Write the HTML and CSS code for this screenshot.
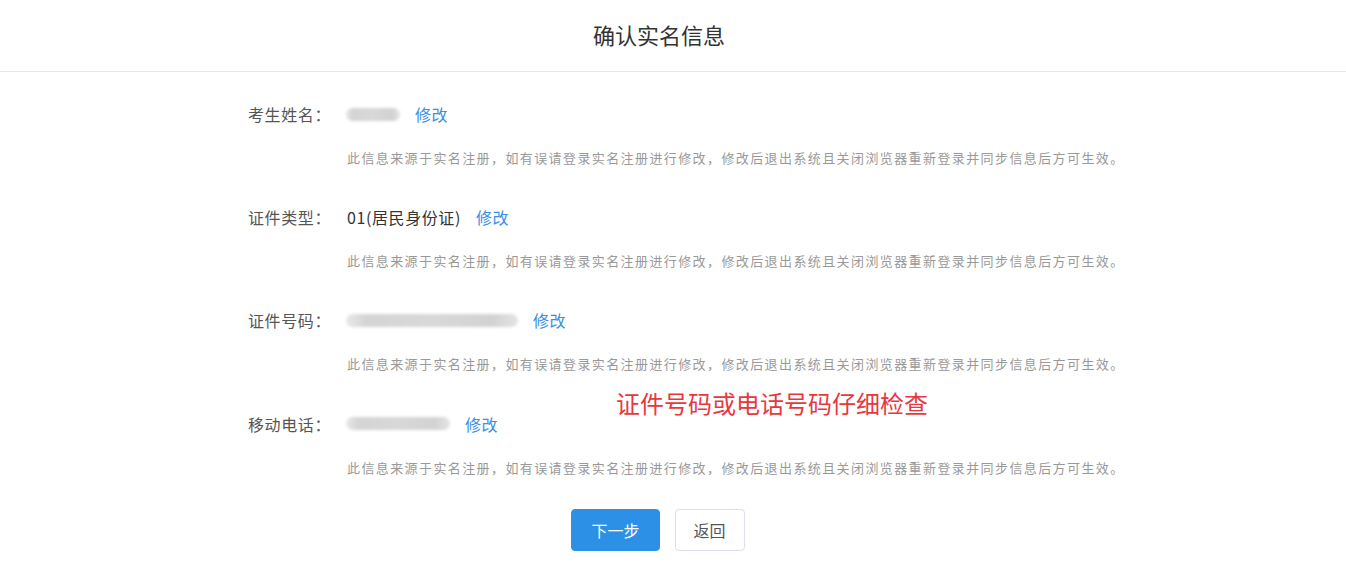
FILE: index.html
```html
<!DOCTYPE html>
<html>
  <head>
    <meta charset="utf-8">
    <title>确认实名信息</title>
    <link rel="stylesheet" href="styles.css">
  </head>
  <body>
    <div class="header">确认实名信息</div>
    <div class="form">
      <div class="row">
        <div class="line">
          <span class="label">考生姓名：</span>
          <span class="blur" style="width: 54px;"></span>
          <a class="edit">修改</a>
        </div>
        <div class="hint">此信息来源于实名注册，如有误请登录实名注册进行修改，修改后退出系统且关闭浏览器重新登录并同步信息后方可生效。</div>
      </div>
      <div class="row">
        <div class="line">
          <span class="label">证件类型：</span>
          <span class="value">01(居民身份证)</span>
          <a class="edit">修改</a>
        </div>
        <div class="hint">此信息来源于实名注册，如有误请登录实名注册进行修改，修改后退出系统且关闭浏览器重新登录并同步信息后方可生效。</div>
      </div>
      <div class="row">
        <div class="line">
          <span class="label">证件号码：</span>
          <span class="blur" style="width: 172px;"></span>
          <a class="edit">修改</a>
        </div>
        <div class="hint">此信息来源于实名注册，如有误请登录实名注册进行修改，修改后退出系统且关闭浏览器重新登录并同步信息后方可生效。</div>
      </div>
      <div class="row">
        <div class="line">
          <span class="label">移动电话：</span>
          <span class="blur" style="width: 104px;"></span>
          <a class="edit">修改</a>
        </div>
        <div class="hint">此信息来源于实名注册，如有误请登录实名注册进行修改，修改后退出系统且关闭浏览器重新登录并同步信息后方可生效。</div>
      </div>
      <div class="note">证件号码或电话号码仔细检查</div>
    </div>
    <div class="actions">
      <button class="btn primary">下一步</button>
      <button class="btn">返回</button>
    </div>
  </body>
</html>
```

FILE: styles.css
```css
body {
  margin: 0;
  background: #fff;
  font-family: "Noto Sans CJK SC", "Noto Sans", sans-serif;
  color: #333;
}
.header {
  height: 71px;
  line-height: 68px;
  padding-right: 28px;
  border-bottom: 1px solid #e6e6e6;
  text-align: center;
  font-size: 22px;
  color: #333;
}
.form {
  position: relative;
  padding: 22px 0 0 248px;
}
.row {
  margin-bottom: 29.2px;
}
.line {
  display: flex;
  align-items: center;
  height: 40px;
  font-size: 16px;
  letter-spacing: 0.6px;
}
.label {
  width: 99px;
  color: #555;
}
.value {
  color: #333;
}
.blur {
  display: inline-block;
  height: 13px;
  margin-left: -1px;
  border-radius: 7px;
  background: linear-gradient(90deg, #e8e8e8 0%, #d4d4d4 12%, #d8d8d8 50%, #d2d2d2 85%, #e4e4e4 100%);
  filter: blur(1.5px);
}
.edit {
  margin-left: 15px;
  color: #3a8ee6;
  cursor: pointer;
}
.hint {
  margin: 14px 0 0 99px;
  line-height: 20px;
  font-size: 13px;
  letter-spacing: 1.4px;
  color: #999;
}
.note {
  position: absolute;
  left: 616px;
  top: 313px;
  font-size: 24px;
  line-height: 36px;
  color: #e8383d;
}
.actions {
  display: flex;
  justify-content: center;
  gap: 15px;
  margin-top: 31.2px;
  padding-right: 30px;
}
.btn {
  height: 42px;
  padding: 0 18px;
  border: 1px solid #dcdfe6;
  border-radius: 4px;
  background: #fff;
  font-family: inherit;
  font-size: 16px;
  color: #555;
}
.btn.primary {
  padding: 0 19px;
  border-color: #2b90e6;
  background: #2b90e6;
  color: #fff;
}
```
